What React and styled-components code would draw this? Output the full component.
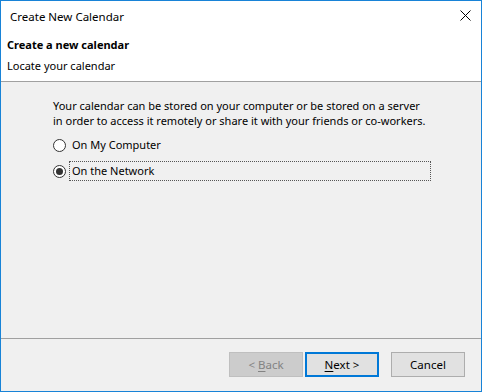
import React from "react";
import styled, { createGlobalStyle } from "styled-components";

const Global = createGlobalStyle`
  html, body { margin: 0; padding: 0; background: #fff; }
  body { font-family: "Noto Sans", "Open Sans", sans-serif; font-size: 11px; }
  * { box-sizing: border-box; }
`;

const Win = styled.div`
  width: 482px;
  height: 392px;
  border: 1px solid #1883d7;
  display: flex;
  flex-direction: column;
  background: #f0f0f0;
  color: #000;
`;

const TitleBar = styled.div`
  height: 30px;
  background: #fff;
  display: flex;
  align-items: center;
  justify-content: space-between;
  padding: 0 10px 0 9px;
  font-size: 11.5px;
`;

const Close = styled.svg`
  width: 11px;
  height: 11px;
  margin-top: -1px;
`;

const Header = styled.div`
  height: 51px;
  background: #fff;
  border-bottom: 1px solid #a0a0a0;
  padding: 3px 0 0 6px;
  display: flex;
  flex-direction: column;
`;

const HeaderTitle = styled.div`
  font-weight: bold;
  line-height: 21px;
`;

const HeaderSub = styled.div`
  line-height: 21px;
`;

const Content = styled.div`
  flex: 1;
  padding: 16px 0 0 51px;
  display: flex;
  flex-direction: column;
`;

const Para = styled.p`
  margin: 0 0 4px 1px;
  line-height: 15px;
  width: 374px;
`;

const RadioRow = styled.label`
  display: flex;
  align-items: center;
  height: 26px;
  gap: 3px;
  padding-left: 1px;
`;

const Circle = styled.span`
  width: 13px;
  height: 13px;
  border-radius: 50%;
  border: 1px solid #333;
  background: #fff;
  display: flex;
  align-items: center;
  justify-content: center;
  flex: none;
  &::after {
    content: "";
    width: 7px;
    height: 7px;
    border-radius: 50%;
    background: ${(p) => (p.$checked ? "#333" : "transparent")};
  }
`;

const RadioText = styled.span`
  flex: ${(p) => (p.$focused ? "0 0 362px" : "none")};
  height: 20px;
  line-height: 18px;
  padding-left: 2px;
  border: 1px dotted ${(p) => (p.$focused ? "#555" : "transparent")};
`;

const Footer = styled.div`
  height: 53px;
  border-top: 1px solid #a0a0a0;
  display: flex;
  justify-content: flex-end;
  align-items: flex-start;
  padding: 13px 16px 0 0;
`;

const Btn = styled.button`
  width: 74px;
  height: 25px;
  margin-left: ${(p) => p.$gap}px;
  font: inherit;
  font-size: 11.5px;
  padding: 0;
  color: ${(p) => (p.disabled ? "#838383" : "#000")};
  background: ${(p) => (p.disabled ? "#cccccc" : "#e1e1e1")};
  border: ${(p) =>
    p.$default ? "2px solid #0078d7" : p.disabled ? "1px solid #bfbfbf" : "1px solid #adadad"};
  u { text-decoration: underline; text-underline-offset: 2px; }
`;

export default function App() {
  return (
    <>
      <Global />
      <Win>
        <TitleBar>
          <span>Create New Calendar</span>
          <Close viewBox="0 0 11 11">
            <path d="M0.5 0.5 L10.5 10.5 M10.5 0.5 L0.5 10.5" stroke="#000" strokeWidth="1" />
          </Close>
        </TitleBar>
        <Header>
          <HeaderTitle>Create a new calendar</HeaderTitle>
          <HeaderSub>Locate your calendar</HeaderSub>
        </Header>
        <Content>
          <Para>
            Your calendar can be stored on your computer or be stored on a server in order to
            access it remotely or share it with your friends or co-workers.
          </Para>
          <RadioRow>
            <Circle />
            <RadioText>On My Computer</RadioText>
          </RadioRow>
          <RadioRow>
            <Circle $checked />
            <RadioText $focused>On the Network</RadioText>
          </RadioRow>
        </Content>
        <Footer>
          <Btn disabled $gap={0}>
            &lt; <u>B</u>ack
          </Btn>
          <Btn $default $gap={2}>
            <u>N</u>ext &gt;
          </Btn>
          <Btn $gap={12}>Cancel</Btn>
        </Footer>
      </Win>
    </>
  );
}
